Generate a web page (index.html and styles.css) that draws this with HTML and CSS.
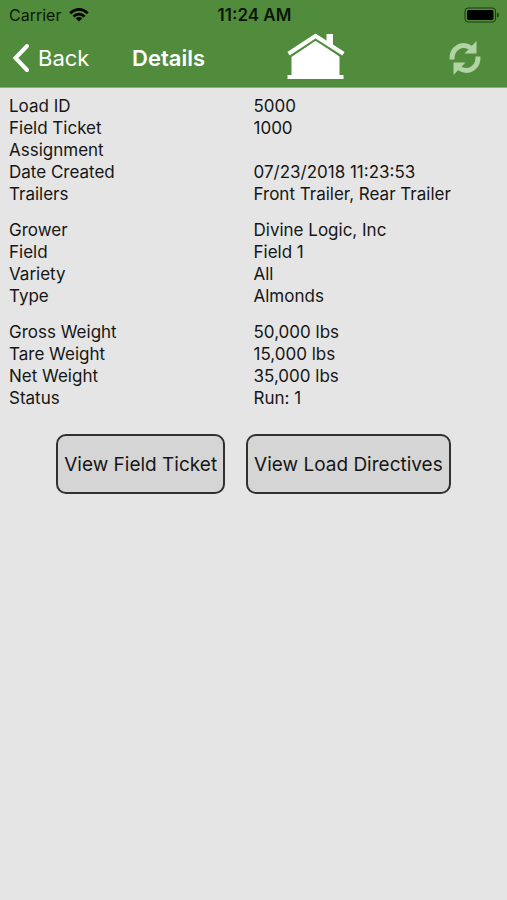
FILE: index.html
```html
<!DOCTYPE html>
<html lang="en">
<head>
    <meta charset="UTF-8">
    <meta name="viewport" content="width=device-width, initial-scale=1.0">
    <title>Details</title>
    <link rel="stylesheet" href="styles.css">
</head>
<body>
    <header class="header">
        <!-- Status bar -->
        <div class="status-bar">
            <div class="carrier">
                <span>Carrier</span>
                <svg width="20" height="14" viewBox="0 0 20 14" fill="none" stroke="#000" stroke-width="2.6">
                    <path d="M1.2 5.2 Q10 -2.4 18.8 5.2"/>
                    <path d="M4.4 8.6 Q10 3.8 15.6 8.6"/>
                    <path d="M10 13.6 L6.7 10.3 Q10 7.6 13.3 10.3 Z" fill="#000" stroke="none"/>
                </svg>
            </div>
            <span class="time">11:24 AM</span>
            <div class="battery">
                <svg width="36" height="16" viewBox="0 0 36 16">
                    <rect x="1" y="1" width="30.5" height="14" rx="3" fill="none" stroke="#1f3a16" stroke-width="1"/>
                    <rect x="3" y="3" width="26.5" height="10" rx="1.5" fill="#000"/>
                    <path d="M33 5.5 Q35 6 35 8 Q35 10 33 10.5 Z" fill="#1f3a16"/>
                </svg>
            </div>
        </div>

        <!-- Navigation bar -->
        <nav class="nav-bar">
            <a class="back" href="#">
                <svg width="18" height="30" viewBox="0 0 18 30" fill="none" stroke="#fff" stroke-width="4" stroke-linecap="round" stroke-linejoin="miter">
                    <path d="M16 3 L4.5 15 L16 27"/>
                </svg>
                <span>Back</span>
            </a>
            <h1 class="title">Details</h1>
            <a class="home" href="#" aria-label="Home">
                <svg width="58" height="50" viewBox="0 0 58 50">
                    <path d="M39.5 12 V1 H46 V17 Z" fill="#fff"/>
                    <path d="M4.5 23.5 L28.5 6 L52.5 23.5 V42 H56.5 V46 H0.5 V42 H4.5 Z" fill="#fff"/>
                    <path d="M2 22.8 L28.5 5.1 L56 22.8" fill="none" stroke="#518c3c" stroke-width="4.4"/>
                    <path d="M1.5 20.7 L28.5 3 L56.5 20.7" fill="none" stroke="#fff" stroke-width="4.2"/>
                </svg>
            </a>
            <button class="refresh" type="button" aria-label="Refresh">
                <svg width="34" height="36" viewBox="0 0 34 36">
                    <path d="M4 19.5 C3.5 8 14 2 23 8" fill="none" stroke="#b1d3a5" stroke-width="5"/>
                    <path d="M28.5 1 V13.5 H16.5 Z" fill="#b1d3a5"/>
                    <path d="M30 16.5 C30.5 28 20 34 11 28" fill="none" stroke="#b1d3a5" stroke-width="5"/>
                    <path d="M5.5 35 V22.5 H17.5 Z" fill="#b1d3a5"/>
                </svg>
            </button>
        </nav>
    </header>

    <main class="content">
        <dl class="details">
            <dt>Load ID</dt><dd>5000</dd>
            <dt>Field Ticket</dt><dd>1000</dd>
            <dt>Assignment</dt><dd></dd>
            <dt>Date Created</dt><dd>07/23/2018 11:23:53</dd>
            <dt>Trailers</dt><dd>Front Trailer, Rear Trailer</dd>
        </dl>
        <dl class="details">
            <dt>Grower</dt><dd>Divine Logic, Inc</dd>
            <dt>Field</dt><dd>Field 1</dd>
            <dt>Variety</dt><dd>All</dd>
            <dt>Type</dt><dd>Almonds</dd>
        </dl>
        <dl class="details">
            <dt>Gross Weight</dt><dd>50,000 lbs</dd>
            <dt>Tare Weight</dt><dd>15,000 lbs</dd>
            <dt>Net Weight</dt><dd>35,000 lbs</dd>
            <dt>Status</dt><dd>Run: 1</dd>
        </dl>

        <div class="actions">
            <button class="btn" type="button">View Field Ticket</button>
            <button class="btn" type="button">View Load Directives</button>
        </div>
    </main>
</body>
</html>
```
FILE: styles.css
```css
* {
    box-sizing: border-box;
}

body {
    margin: 0;
    min-height: 100vh;
    background-color: #e5e5e5;
    color: #161616;
    font-family: Inter, "Liberation Sans", sans-serif;
    font-size: 17px;
    line-height: 22px;
}

svg {
    display: block;
}

/* Header */
.header {
    background-color: #518c3c;
    border-bottom: 1px solid #8fae84;
}

.status-bar {
    display: grid;
    grid-template-columns: 1fr auto 1fr;
    align-items: center;
    height: 28px;
    padding: 2px 7px 0 9px;
    color: #0c1608;
    font-size: 16px;
}

.carrier {
    display: flex;
    align-items: center;
    gap: 8px;
}

.time {
    font-size: 17px;
    font-weight: 600;
}

.battery {
    justify-self: end;
}

.nav-bar {
    display: grid;
    grid-template-columns: 24% 34% 1fr auto;
    align-items: center;
    height: 59px;
    padding: 0 25px 0 11px;
    color: #fff;
}

.back {
    display: flex;
    align-items: center;
    gap: 9px;
    color: #fff;
    font-size: 22px;
    text-decoration: none;
}

.title {
    margin: 0;
    padding-left: 8px;
    font-size: 22px;
    font-weight: 600;
}

.home {
    justify-self: start;
    padding-left: 3px;
}

.refresh {
    padding: 0;
    border: none;
    background: none;
    cursor: pointer;
}

/* Load details */
.content {
    padding: 7px 9px;
}

.details {
    display: grid;
    grid-template-columns: 1fr 1fr;
    grid-auto-rows: minmax(22px, auto);
    margin: 0 0 14px;
}

.details dd {
    margin: 0;
}

/* Buttons */
.actions {
    display: flex;
    flex-wrap: wrap;
    justify-content: center;
    gap: 21px;
    padding-top: 11px;
}

.btn {
    height: 60px;
    padding: 0 6px;
    border: 2px solid #303030;
    border-radius: 10px;
    background-color: #d5d5d5;
    color: #161616;
    font-family: inherit;
    font-size: 19px;
    cursor: pointer;
}
```
